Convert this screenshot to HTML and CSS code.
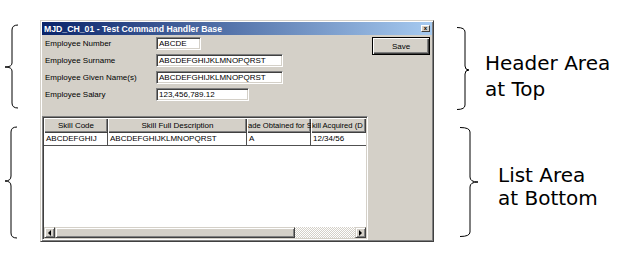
FILE: index.html
```html
<!DOCTYPE html>
<html lang="en">
<head>
    <meta charset="UTF-8">
    <title>Test Command Handler Base</title>
    <link rel="stylesheet" href="styles.css">
</head>
<body>
    <div class="page">
        <svg class="braces-left" width="40" height="255" viewBox="0 0 40 255">
            <path d="M18 25 Q12 25 12 30 L12 63 Q12 67 5 67 Q12 67 12 71 L12 103 Q12 108 18 108" />
            <path d="M17 127 Q11 127 11 132 L11 176 Q11 181 5 181 Q11 181 11 186 L11 233 Q11 238 17 238" />
        </svg>

        <div class="window">
            <div class="titlebar">
                <span class="title">MJD_CH_01 - Test Command Handler Base</span>
                <span class="close">x</span>
            </div>
            <div class="client">
                <div class="header-area">
                    <div class="fields">
                        <span class="label">Employee Number</span>
                        <div class="input w-number">ABCDE</div>
                        <span class="label">Employee Surname</span>
                        <div class="input w-name">ABCDEFGHIJKLMNOPQRST</div>
                        <span class="label">Employee Given Name(s)</span>
                        <div class="input w-name">ABCDEFGHIJKLMNOPQRST</div>
                        <span class="label">Employee Salary</span>
                        <div class="input w-salary">123,456,789.12</div>
                    </div>
                    <button class="save">Save</button>
                </div>

                <div class="list">
                    <div class="list-view">
                        <div class="list-head">
                            <div class="col c1 center">Skill Code</div>
                            <div class="col c2 center">Skill Full Description</div>
                            <div class="col c3 tight">ade Obtained for S</div>
                            <div class="col c4 tight">kill Acquired (D</div>
                        </div>
                        <div class="list-row">
                            <div class="cell c1">ABCDEFGHIJ</div>
                            <div class="cell c2">ABCDEFGHIJKLMNOPQRST</div>
                            <div class="cell c3">A</div>
                            <div class="cell c4">12/34/56</div>
                        </div>
                    </div>
                    <div class="hscroll">
                        <div class="sb-btn"><span class="arrow-left"></span></div>
                        <div class="sb-thumb"></div>
                        <div class="sb-track"></div>
                        <div class="sb-btn"><span class="arrow-right"></span></div>
                    </div>
                </div>
            </div>
        </div>

        <div class="notes">
            <div class="note note-top">
                <svg width="13" height="83" viewBox="0 0 13 83">
                    <path d="M0 0.5 Q8 0.5 8 5 L8 39 Q8 43 12 43 Q8 43 8 47 L8 78 Q8 82.5 0 82.5" />
                </svg>
                <div class="note-text">Header Area<br>at Top</div>
            </div>
            <div class="note note-bottom">
                <svg width="19" height="110" viewBox="0 0 19 110">
                    <path d="M0 0.5 Q10 0.5 10 5 L10 50 Q10 55 18 55 Q10 55 10 60 L10 105 Q10 109.5 0 109.5" />
                </svg>
                <div class="note-text">List Area<br>at Bottom</div>
            </div>
        </div>
    </div>
</body>
</html>
```

FILE: styles.css
```css
body {
    margin: 0;
    background: #fff;
}
.page {
    display: flex;
    align-items: flex-start;
    width: 621px;
    height: 255px;
    overflow: hidden;
}
.braces-left path,
.note path {
    fill: none;
    stroke: #000;
    stroke-width: 1;
}

/* window */
.window {
    width: 394px;
    height: 222px;
    margin-top: 20px;
    box-sizing: border-box;
    background: #d4d0c8;
    border: 1px solid;
    border-color: #d4d0c8 #404040 #404040 #d4d0c8;
    box-shadow: inset 1px 1px #fff, inset -1px -1px #808080;
    padding: 1px;
    display: flex;
    flex-direction: column;
}
.titlebar {
    height: 13px;
    display: flex;
    align-items: center;
    justify-content: space-between;
    padding: 0 2px 0 2px;
    background: linear-gradient(to right, #0a246a, #a6caf0);
}
.title {
    font-family: "Liberation Sans", Arial, sans-serif;
    font-weight: bold;
    font-size: 8.7px;
    color: #fff;
    white-space: nowrap;
}
.close {
    width: 9px;
    height: 7px;
    box-sizing: border-box;
    background: #d4d0c8;
    border: 1px solid;
    border-color: #fff #404040 #404040 #fff;
    font-family: "Liberation Sans", Arial, sans-serif;
    font-weight: bold;
    font-size: 6px;
    line-height: 4px;
    text-align: center;
    color: #000;
}
.client {
    flex: 1;
    display: flex;
    flex-direction: column;
    font-family: "Liberation Sans", Arial, sans-serif;
    font-size: 8px;
    color: #000;
}

/* header area */
.header-area {
    display: flex;
    justify-content: space-between;
    align-items: flex-start;
    padding: 2px 2px 0 3px;
}
.fields {
    display: grid;
    grid-template-columns: 111px auto;
    grid-auto-rows: 13px;
    row-gap: 4px;
    align-items: center;
}
.input {
    height: 13px;
    box-sizing: border-box;
    background: #fff;
    border: 1px solid;
    border-color: #808080 #fff #fff #808080;
    box-shadow: inset 1px 1px #404040, inset -1px -1px #d4d0c8;
    padding: 0 2px;
    line-height: 11px;
    white-space: nowrap;
    overflow: hidden;
}
.w-number { width: 45px; }
.w-name { width: 127px; }
.w-salary { width: 93px; }
.save {
    width: 58px;
    height: 18px;
    padding: 0;
    background: #d4d0c8;
    border: 1px solid #000;
    box-shadow: inset 1px 1px #fff, inset -1px -1px #404040, inset -2px -2px #808080;
    font-family: "Liberation Sans", Arial, sans-serif;
    font-size: 8px;
    color: #000;
}

/* list */
.list {
    width: 326px;
    height: 124px;
    margin-top: 15px;
    box-sizing: border-box;
    border: 1px solid;
    border-color: #808080 #fff #fff #808080;
    box-shadow: inset 1px 1px #404040, inset -1px -1px #d4d0c8;
    padding: 1px;
    display: flex;
    flex-direction: column;
}
.list-view {
    flex: 1;
    background: #fff;
    overflow: hidden;
}
.list-head,
.list-row {
    display: flex;
    white-space: nowrap;
}
.list-head {
    height: 15px;
    background: #d4d0c8;
}
.col {
    box-sizing: border-box;
    line-height: 15px;
    overflow: hidden;
    box-shadow: inset 1px 1px #fff, inset -1px -1px #404040, inset -2px -2px #808080;
    padding: 0 2px;
}
.center { text-align: center; }
.tight {
    padding: 0 0 0 1px;
    font-size: 7.6px;
}
.c1 { width: 64px; flex: none; }
.c2 { width: 139px; flex: none; }
.c3 { width: 64px; flex: none; }
.c4 { flex: 1; }
.list-row {
    height: 12px;
    border-bottom: 1px solid #505050;
}
.cell {
    box-sizing: border-box;
    line-height: 12px;
    padding: 0 2px;
    overflow: hidden;
    border-right: 1px solid #505050;
}
.cell.c4 { border-right: none; }

/* horizontal scrollbar */
.hscroll {
    height: 11px;
    display: flex;
}
.sb-btn,
.sb-thumb {
    box-sizing: border-box;
    background: #d4d0c8;
    border: 1px solid;
    border-color: #d4d0c8 #404040 #404040 #d4d0c8;
    box-shadow: inset 1px 1px #fff, inset -1px -1px #808080;
}
.sb-btn {
    width: 11px;
    display: flex;
    align-items: center;
    justify-content: center;
}
.sb-thumb { width: 240px; }
.sb-track {
    flex: 1;
    background-color: #fff;
    background-image: repeating-conic-gradient(#d4d0c8 0 25%, #fff 0 50%);
    background-size: 2px 2px;
}
.arrow-left {
    border-top: 3px solid transparent;
    border-bottom: 3px solid transparent;
    border-right: 3px solid #000;
}
.arrow-right {
    border-top: 3px solid transparent;
    border-bottom: 3px solid transparent;
    border-left: 3px solid #000;
}

/* annotations */
.notes {
    display: flex;
    flex-direction: column;
}
.note {
    display: flex;
    align-items: flex-start;
    font-family: "DejaVu Sans", Verdana, sans-serif;
    font-size: 20px;
    color: #000;
}
.note-top {
    margin: 27px 0 0 23px;
}
.note-top .note-text {
    margin-left: 15px;
    padding-top: 23px;
    line-height: 26px;
}
.note-bottom {
    margin: 17px 0 0 26px;
}
.note-bottom .note-text {
    margin-left: 19px;
    padding-top: 37px;
    line-height: 23px;
}
```
